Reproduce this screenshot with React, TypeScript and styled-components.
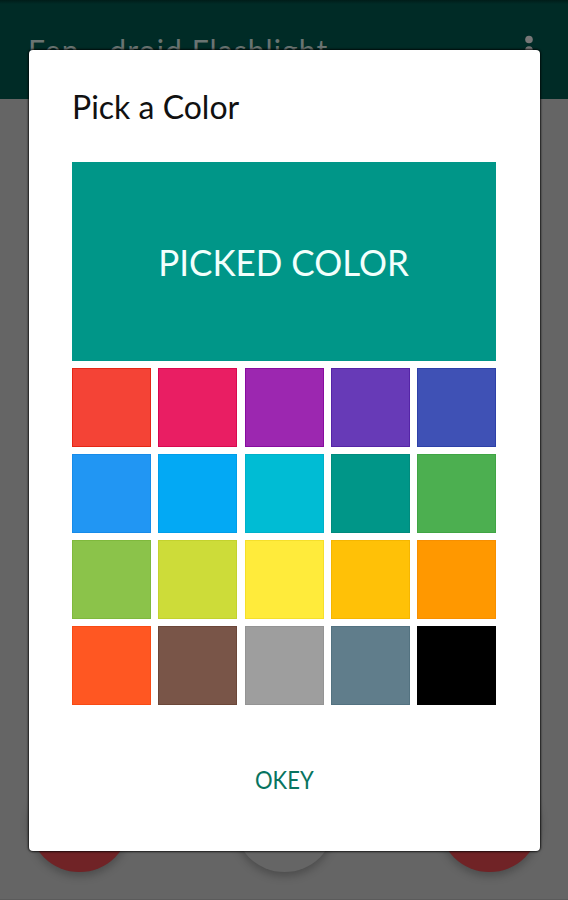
import React from "react";
import styled, { createGlobalStyle } from "styled-components";

const Global = createGlobalStyle`
  * { box-sizing: border-box; }
  body { margin: 0; overflow: hidden; background: #656565; font-family: Lato, sans-serif; }
`;

const Screen = styled.div`
  position: relative;
  width: 568px;
  height: 900px;
  overflow: hidden;
  display: flex;
  flex-direction: column;
  justify-content: space-between;
  background: #656565;
  border-bottom: 1px solid #5b5b5b;
`;

const AppBar = styled.header`
  display: flex;
  justify-content: space-between;
  height: 99px;
  padding: 32px 32px 0 28px;
  background: linear-gradient(#001d19 0, #002b26 4px);
`;

const Label = styled.span<{ $size: number; $stretch: number; $spacing?: number; $weight?: number }>`
  display: block;
  width: max-content;
  white-space: nowrap;
  font-size: ${(p) => p.$size}px;
  font-weight: ${(p) => p.$weight ?? 400};
  line-height: 1.2;
  letter-spacing: ${(p) => p.$spacing ?? 0}px;
  transform: scaleX(${(p) => p.$stretch});
`;

const AppTitle = styled(Label)`
  color: #6a7472;
  transform-origin: left;
`;

const Menu = styled.svg`
  display: block;
  width: 14px;
  height: 40px;
  margin-top: 2px;
  fill: #777;
`;

const Actions = styled.div`
  display: flex;
  justify-content: space-between;
  padding: 0 28.5px 27px;
`;

const RoundButton = styled.span<{ $color: string }>`
  width: 101px;
  height: 101px;
  border-radius: 50%;
  background: ${(p) => p.$color};
  box-shadow: 0 4px 8px rgba(0, 0, 0, 0.25);
`;

const Dialog = styled.section`
  position: absolute;
  left: 28.5px;
  top: 50px;
  width: 511.5px;
  height: 801px;
  padding: 37px 44px 0 43.5px;
  display: flex;
  flex-direction: column;
  background: #fff;
  border-radius: 4px;
  box-shadow: 0 0 2px 1px rgba(0, 0, 0, 0.75);
`;

const Heading = styled.h1`
  height: 75px;
  margin: 0;
  color: #111;
`;

const DialogTitle = styled(Label)`
  transform-origin: left;
`;

const Preview = styled.div`
  display: flex;
  align-items: center;
  justify-content: center;
  height: 199px;
  padding-top: 1px;
  background: #009688;
  color: #f2fffc;
`;

const Swatches = styled.div`
  display: grid;
  grid-template-columns: repeat(5, 79px);
  grid-auto-rows: 79px;
  justify-content: space-between;
  row-gap: 7.1px;
  margin-top: 7px;
`;

const Swatch = styled.button<{ $color: string; $edge: string }>`
  padding: 0;
  border: 1px solid ${(p) => p.$edge};
  background: ${(p) => p.$color};
`;

const Confirm = styled.button`
  align-self: center;
  margin-top: 59px;
  padding: 0;
  border: 0;
  background: none;
  color: #087460;
  font-family: inherit;
`;

const colors = [
  ["#f44336", "#e52615"], ["#e91e63", "#d9084f"], ["#9c27b0", "#880c9f"], ["#673ab7", "#5524a7"], ["#3f51b5", "#2d40a8"],
  ["#2196f3", "#168be9"], ["#03a9f4", "#009ee9"], ["#00bcd4", "#00b1c9"], ["#009688", "#008b7d"], ["#4caf50", "#40a544"],
  ["#8bc34a", "#7fb93c"], ["#cddc39", "#c3d22d"], ["#ffeb3b", "#f5df2b"], ["#ffc107", "#f5b600"], ["#ff9800", "#f78f00"],
  ["#ff5722", "#f84a14"], ["#795548", "#6c4739"], ["#9e9e9e", "#949494"], ["#607d8b", "#537280"], ["#000000", "#000000"],
];

export default function App() {
  return (
    <Screen>
      <Global />
      <AppBar>
        <AppTitle $size={31} $stretch={0.97} $spacing={1.1}>Fen - droid Flashlight</AppTitle>
        <Menu viewBox="0 0 14 40">
          <circle cx="7" cy="5.5" r="3.8" />
          <circle cx="7" cy="16" r="3.8" />
          <circle cx="7" cy="26.5" r="3.8" />
        </Menu>
      </AppBar>
      <Actions>
        <RoundButton $color="#702326" />
        <RoundButton $color="#656565" />
        <RoundButton $color="#702326" />
      </Actions>
      <Dialog>
        <Heading>
          <DialogTitle $size={33} $stretch={0.97}>Pick a Color</DialogTitle>
        </Heading>
        <Preview>
          <Label $size={37} $stretch={0.945}>PICKED COLOR</Label>
        </Preview>
        <Swatches>
          {colors.map(([color, edge]) => (
            <Swatch key={color} $color={color} $edge={edge} aria-label={color} />
          ))}
        </Swatches>
        <Confirm>
          <Label $size={25} $stretch={0.88}>OKEY</Label>
        </Confirm>
      </Dialog>
    </Screen>
  );
}
